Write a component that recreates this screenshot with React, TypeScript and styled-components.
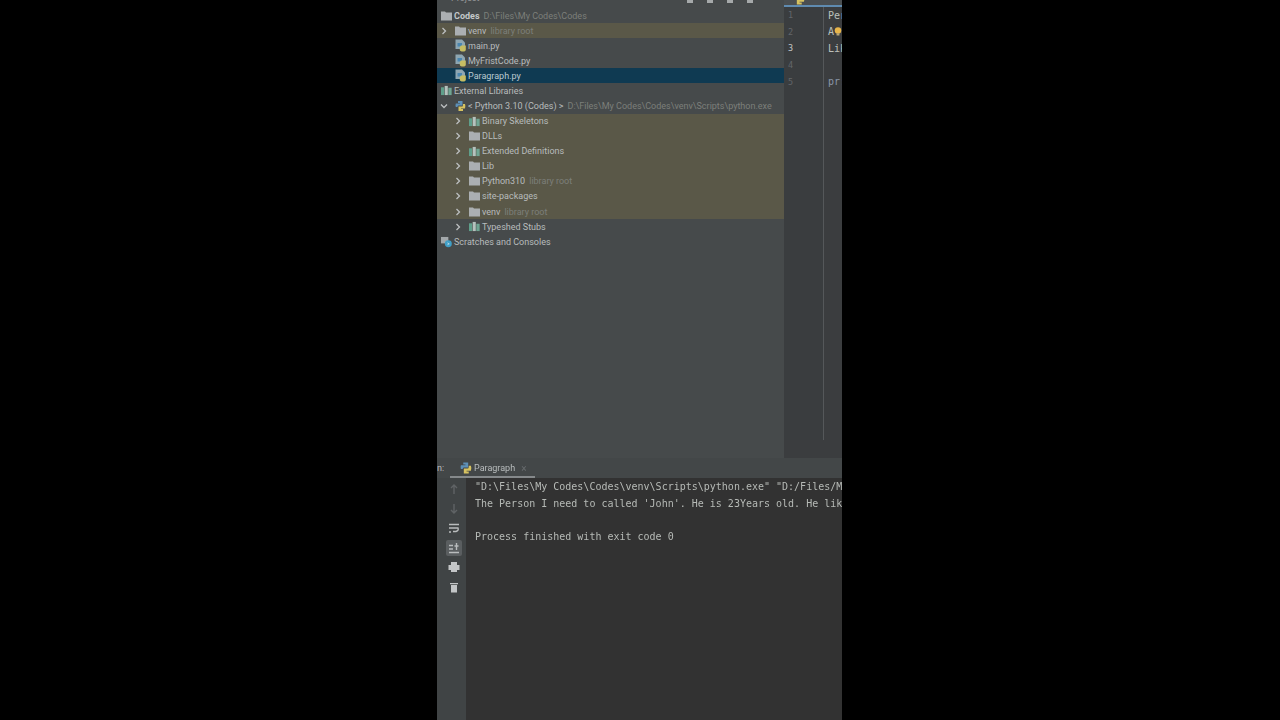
import styled, { createGlobalStyle } from "styled-components"

const GlobalStyle = createGlobalStyle`
  html, body {
    margin: 0;
    height: 100%;
    background: #000;
  }
`;

//#region CSS
const Page = styled.div`
  display: flex;
  justify-content: center;
  height: 720px;
  padding-right: 1px;
  overflow: hidden;
  background: #000;
`;

const Frame = styled.div`
  display: flex;
  flex-direction: column;
  width: 405px;
  height: 720px;
  overflow: hidden;
  filter: blur(0.6px);
  font-family: Roboto, "Liberation Sans", sans-serif;
  color: #b8bcbd;
`;

const Top = styled.div`
  display: flex;
  height: 458px;
  flex: none;
`;

const ProjectPanel = styled.div`
  width: 347px;
  flex: none;
  background: #464a4b;
`;

const ProjectHeader = styled.div`
  display: flex;
  justify-content: flex-end;
  gap: 14px;
  height: 8px;
  padding: 0 31px 0 14px;
  overflow: hidden;
`;

const HeaderTitle = styled.span`
  margin: -7px auto 0 0;
  font-size: 9px;
  line-height: 11px;
  color: #96999a;
`;

const HeaderMark = styled.span`
  width: 6px;
  height: 3px;
  background: #a5a9aa;
`;

const Row = styled.div<{ $level: number; $tone?: "root" | "selected" }>`
  display: flex;
  align-items: center;
  height: 15.08px;
  padding-left: ${({ $level }) => ($level > 1 ? 4 + ($level - 1) * 14 : 4)}px;
  font-size: 9px;
  white-space: nowrap;
  background: ${({ $tone }) =>
    $tone === "root" ? "#5a5848" : $tone === "selected" ? "#0f3a52" : "transparent"};
  color: ${({ $tone }) => ($tone === "selected" ? "#bccad0" : "#b8bcbd")};
`;

const ChevronSlot = styled.span`
  display: flex;
  width: 14px;
  margin-left: -1px;
  margin-right: 1px;
  flex: none;
`;

const IconSlot = styled.span`
  display: flex;
  width: 11px;
  margin-right: 2px;
  flex: none;
`;

const Hint = styled.span`
  margin-left: 4px;
  color: #7c7f7a;
`;

const BoldName = styled.span`
  font-weight: 700;
  color: #c4c7c8;
`;

const Editor = styled.div`
  display: flex;
  flex-direction: column;
  flex: 1;
  min-width: 0;
  background: #3b3d3f;
`;

const EditorTabs = styled.div`
  display: flex;
  align-items: flex-end;
  height: 5px;
  padding-left: 9px;
  flex: none;
  overflow: hidden;
  background: #4a4e50;
  border-bottom: 2px solid #5f8bb0;
`;

const EditorBody = styled.div`
  display: flex;
  height: 433px;
  flex: none;
`;

const Gutter = styled.div`
  width: 39px;
  flex: none;
  background: #3a3d3f;
  border-right: 1px solid #55585a;
`;

const LineNumber = styled.div<{ $current?: boolean }>`
  display: flex;
  align-items: center;
  height: 16.6px;
  padding-left: 4px;
  font-family: "DejaVu Sans Mono", monospace;
  font-size: 8.5px;
  color: ${({ $current }) => ($current ? "#c4c6c7" : "#62666a")};
`;

const Code = styled.div`
  flex: 1;
  min-width: 0;
  padding-left: 4px;
  overflow: hidden;
`;

const CodeLine = styled.div<{ $fn?: boolean }>`
  display: flex;
  align-items: center;
  height: 16.6px;
  font-family: "DejaVu Sans Mono", monospace;
  font-size: 10px;
  white-space: nowrap;
  color: ${({ $fn }) => ($fn ? "#8a96a8" : "#bcc0bb")};
`;

const RunTabs = styled.div`
  display: flex;
  align-items: center;
  height: 20px;
  flex: none;
  background: #434748;
  font-size: 9px;
`;

const RunLabel = styled.span`
  width: 13px;
  flex: none;
`;

const RunTab = styled.div`
  display: flex;
  align-items: center;
  gap: 2px;
  width: 85px;
  height: 18px;
  flex: none;
  box-sizing: border-box;
  margin-top: 2px;
  padding-left: 10px;
  border-bottom: 2px solid #85898b;
`;

const CloseMark = styled.span`
  margin-left: 4px;
  font-size: 10px;
  color: #686c6e;
`;

const RunBody = styled.div`
  display: flex;
  flex: 1;
  min-height: 0;
`;

const Strip = styled.div`
  display: flex;
  flex-direction: column;
  align-items: center;
  width: 29px;
  flex: none;
  box-sizing: border-box;
  padding: 3px 0 0 5px;
  background: #404445;
`;

const StripButton = styled.span<{ $active?: boolean }>`
  display: flex;
  align-items: center;
  justify-content: center;
  width: 16px;
  height: 16px;
  margin-bottom: 3.6px;
  border-radius: 2px;
  background: ${({ $active }) => ($active ? "#5a5e60" : "transparent")};
`;

const Console = styled.div`
  flex: 1;
  min-width: 0;
  padding: 1px 0 0 9px;
  overflow: hidden;
  background: #323232;
`;

const ConsoleLine = styled.div`
  height: 16.6px;
  line-height: 16.6px;
  font-family: "DejaVu Sans Mono", monospace;
  font-size: 10px;
  white-space: pre;
  color: #b6bab6;
`;
//#endregion

function Chevron({ open }: { open?: boolean }) {
  return (
    <svg width="8" height="8" viewBox="0 0 8 8" fill="none" stroke="#bcbfc0" strokeWidth="1.3">
      <path d={open ? "M1 2.5 L4 5.5 L7 2.5" : "M2.5 1 L5.5 4 L2.5 7"} />
    </svg>
  );
}

function Folder() {
  return (
    <svg width="11" height="10" viewBox="0 0 11 10">
      <path d="M0 0.5 H4 L5 1.5 H11 V9.5 H0 Z" fill="#abafb2" />
    </svg>
  );
}

function Library() {
  return (
    <svg width="12" height="11" viewBox="0 0 12 11">
      <rect x="0" y="2" width="3.4" height="8.5" fill="#5f9f8b" />
      <rect x="4" y="0.5" width="3.4" height="10" fill="#b4c2be" />
      <rect x="8" y="2.5" width="3.6" height="8" fill="#6fa593" />
    </svg>
  );
}

function PythonLogo() {
  return (
    <svg width="12" height="12" viewBox="0 0 11 11">
      <path d="M3 0.5 H7.5 V5 H3.5 Q2.5 5 2.5 6.5 H0.8 Q0.2 5 0.8 3 H5 V2.4 H3 Z" fill="#5d90b8" />
      <path d="M8 3.5 H10 Q10.8 5.5 10 8 H6 V8.6 H8 V10.5 H3.5 V6 H7 Q8 6 8 4.5 Z" fill="#d6c260" />
    </svg>
  );
}

function PythonFile() {
  return (
    <svg width="11" height="13" viewBox="0 0 11 13">
      <path d="M0.5 0.5 H7 L10 3.5 V10 H0.5 Z" fill="#8ea6b2" />
      <path d="M2.5 4 H7 V7.5 H2.5 Z" fill="#4a86b0" />
      <path d="M6 6.5 H10.8 V10.5 Q10.8 12.5 8 12.5 Q4.8 12.5 4.8 10.5 V8 Z" fill="#c6bd63" />
    </svg>
  );
}

function Scratches() {
  return (
    <svg width="12" height="12" viewBox="0 0 12 12">
      <rect x="0" y="0.5" width="8" height="7" fill="#a3a8aa" />
      <circle cx="8" cy="8" r="3.8" fill="#3f9fc7" />
      <path d="M7 7 L9 8 L7 9" stroke="#e4eef2" strokeWidth="0.7" fill="none" />
    </svg>
  );
}

function Bulb() {
  return (
    <svg width="11" height="13" viewBox="0 0 11 13">
      <circle cx="5.5" cy="5" r="4.5" fill="#e8b54a" />
      <rect x="3.5" y="9" width="4" height="3" fill="#b9a678" />
    </svg>
  );
}

function StripIcon({ d, color = "#b9bcbd" }: { d: string; color?: string }) {
  return (
    <svg width="12" height="12" viewBox="0 0 12 12" fill="none" stroke={color} strokeWidth="1.4">
      <path d={d} />
    </svg>
  );
}

type TreeItem = {
  level: number;
  name: string;
  icon: "folder" | "library" | "python" | "file" | "scratch";
  chevron?: "open" | "closed";
  hint?: string;
  tone?: "root" | "selected";
  bold?: boolean;
};

const tree: TreeItem[] = [
  { level: 0, name: "Codes", icon: "folder", hint: "D:\\Files\\My Codes\\Codes", bold: true },
  { level: 1, name: "venv", icon: "folder", chevron: "closed", hint: "library root", tone: "root" },
  { level: 1, name: "main.py", icon: "file" },
  { level: 1, name: "MyFristCode.py", icon: "file" },
  { level: 1, name: "Paragraph.py", icon: "file", tone: "selected" },
  { level: 0, name: "External Libraries", icon: "library" },
  { level: 1, name: "< Python 3.10 (Codes) >", icon: "python", chevron: "open", hint: "D:\\Files\\My Codes\\Codes\\venv\\Scripts\\python.exe" },
  { level: 2, name: "Binary Skeletons", icon: "library", chevron: "closed", tone: "root" },
  { level: 2, name: "DLLs", icon: "folder", chevron: "closed", tone: "root" },
  { level: 2, name: "Extended Definitions", icon: "library", chevron: "closed", tone: "root" },
  { level: 2, name: "Lib", icon: "folder", chevron: "closed", tone: "root" },
  { level: 2, name: "Python310", icon: "folder", chevron: "closed", hint: "library root", tone: "root" },
  { level: 2, name: "site-packages", icon: "folder", chevron: "closed", tone: "root" },
  { level: 2, name: "venv", icon: "folder", chevron: "closed", hint: "library root", tone: "root" },
  { level: 2, name: "Typeshed Stubs", icon: "library", chevron: "closed" },
  { level: 0, name: "Scratches and Consoles", icon: "scratch" },
];

const icons = {
  folder: <Folder />,
  library: <Library />,
  python: <PythonLogo />,
  file: <PythonFile />,
  scratch: <Scratches />,
};

export default function App() {
  return (
    <Page>
      <GlobalStyle />
      <Frame>
        <Top>
          <ProjectPanel>
            <ProjectHeader>
              <HeaderTitle>Project</HeaderTitle>
              <HeaderMark />
              <HeaderMark />
              <HeaderMark />
              <HeaderMark />
            </ProjectHeader>
            {tree.map((item, i) => (
              <Row key={i} $level={item.level} $tone={item.tone}>
                {item.level > 0 && (
                  <ChevronSlot>
                    {item.chevron && <Chevron open={item.chevron === "open"} />}
                  </ChevronSlot>
                )}
                <IconSlot>{icons[item.icon]}</IconSlot>
                {item.bold ? <BoldName>{item.name}</BoldName> : item.name}
                {item.hint && <Hint>{item.hint}</Hint>}
              </Row>
            ))}
          </ProjectPanel>
          <Editor>
            <EditorTabs>
              <PythonLogo />
            </EditorTabs>
            <EditorBody>
              <Gutter>
                <LineNumber>1</LineNumber>
                <LineNumber>2</LineNumber>
                <LineNumber $current>3</LineNumber>
                <LineNumber>4</LineNumber>
                <LineNumber>5</LineNumber>
              </Gutter>
              <Code>
                <CodeLine>Per</CodeLine>
                <CodeLine>A<Bulb /></CodeLine>
                <CodeLine>Lik</CodeLine>
                <CodeLine />
                <CodeLine $fn>pr:</CodeLine>
              </Code>
            </EditorBody>
          </Editor>
        </Top>
        <RunTabs>
          <RunLabel>n:</RunLabel>
          <RunTab>
            <PythonLogo />
            Paragraph
            <CloseMark>×</CloseMark>
          </RunTab>
        </RunTabs>
        <RunBody>
          <Strip>
            <StripButton><StripIcon color="#5f6365" d="M6 11 V2 M3 5 L6 2 L9 5" /></StripButton>
            <StripButton><StripIcon color="#5f6365" d="M6 1 V10 M3 7 L6 10 L9 7" /></StripButton>
            <StripButton><StripIcon d="M1 2.5 H11 M1 6 H10 Q11 8.5 8 9.5 H5 M1 10 H3" /></StripButton>
            <StripButton $active><StripIcon d="M1 10.5 H11 M1 7 H5 M1 3.5 H5 M8.5 1 V8 M6.5 4 H10.5" /></StripButton>
            <StripButton>
              <svg width="12" height="12" viewBox="0 0 12 12">
                <path d="M3 1 H9 V4 H11.5 V9 H9 V11 H3 V9 H0.5 V4 H3 Z" fill="#c3c6c7" />
              </svg>
            </StripButton>
            <StripButton>
              <svg width="12" height="12" viewBox="0 0 12 12">
                <path d="M2 2 H10 V3.2 H2 Z M3 4 H9 V11.5 H3 Z" fill="#c3c6c7" />
              </svg>
            </StripButton>
          </Strip>
          <Console>
            <ConsoleLine>{'"D:\\Files\\My Codes\\Codes\\venv\\Scripts\\python.exe" "D:/Files/My Codes/Codes/Paragraph.py"'}</ConsoleLine>
            <ConsoleLine>{"The Person I need to called 'John'. He is 23Years old. He likes"}</ConsoleLine>
            <ConsoleLine>{" "}</ConsoleLine>
            <ConsoleLine>Process finished with exit code 0</ConsoleLine>
          </Console>
        </RunBody>
      </Frame>
    </Page>
  );
}
